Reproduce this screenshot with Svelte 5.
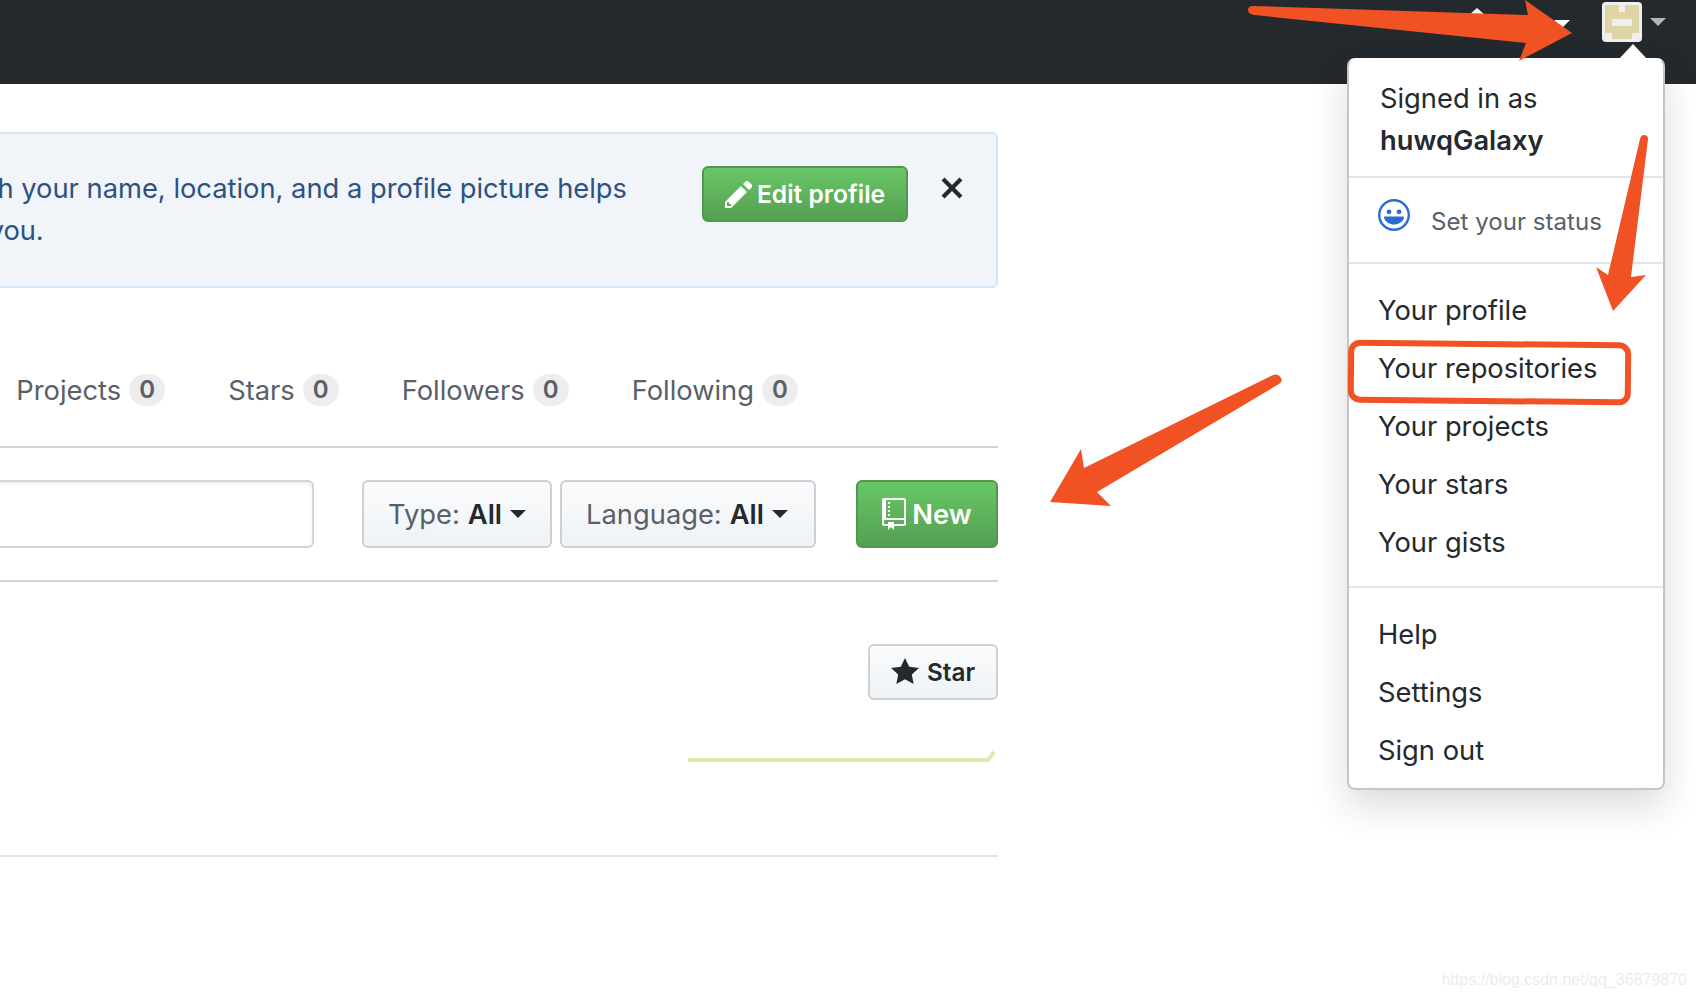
<script>
	const tabs = ['Projects', 'Stars', 'Followers', 'Following'];
	const menuMain = ['Your profile', 'Your repositories', 'Your projects', 'Your stars', 'Your gists'];
	const menuExtra = ['Help', 'Settings', 'Sign out'];
</script>

<div class="page">
	<header class="topbar">
		<span class="tri up"></span>
		<span class="tri down"></span>
		<svg class="avatar" viewBox="0 0 40 40" aria-hidden="true">
			<rect width="40" height="40" rx="4" fill="#efefef" />
			<path d="M3 3h14v7h6V3h14v28h-7v6H10v-6H3z" fill="#dfd4a3" />
			<rect x="10" y="17" width="20" height="7" fill="#efefef" />
		</svg>
		<span class="tri gray"></span>
	</header>

	<main class="content">
		<section class="banner">
			<p class="message">
				Updating your profile with your name, location, and a profile picture helps<br />
				<span class="second">other users get to know you.</span>
			</p>
			<button class="btn green edit">
				<svg viewBox="0 0 14 16" width="28" height="32" fill="#fff" aria-hidden="true">
					<path d="M0 12v3h3l8-8-3-3-8 8zm3 2H1v-2h1v1h1v1zm10.3-9.3L12 6 9 3l1.3-1.3a.996.996 0 011.41 0l1.59 1.59c.39.39.39 1.02 0 1.41z" />
				</svg>
				Edit profile
			</button>
			<svg class="close" viewBox="0 0 12 16" width="24" height="32" fill="#24292e" aria-hidden="true">
				<path d="M7.48 8l3.75 3.75-1.48 1.48L6 9.48l-3.75 3.75-1.48-1.48L4.52 8 .77 4.25l1.48-1.48L6 6.52l3.75-3.75 1.48 1.48L7.48 8z" />
			</svg>
		</section>

		<nav class="tabs">
			{#each tabs as tab}
				<span class="tab">{tab}<span class="count">0</span></span>
			{/each}
		</nav>

		<div class="filters">
			<div class="search"></div>
			<button class="btn gray type">Type: <b>All</b><i class="caret"></i></button>
			<button class="btn gray lang">Language: <b>All</b><i class="caret"></i></button>
			<button class="btn green new">
				<svg viewBox="0 0 12 16" width="24" height="32" fill="#fff" aria-hidden="true">
					<path d="M4 9H3V8h1v1zm0-3H3v1h1V6zm0-2H3v1h1V4zm0-2H3v1h1V2zm8-1v12c0 .55-.45 1-1 1H6v2l-1.5-1.5L3 16v-2H1c-.55 0-1-.45-1-1V1c0-.55.45-1 1-1h10c.55 0 1 .45 1 1zm-1 10H1v2h2v-1h3v1h5v-2zm0-10H2v9h9V1z" />
				</svg>
				New
			</button>
		</div>

		<div class="repo">
			<button class="btn gray star">
				<svg viewBox="0 0 14 16" width="28" height="32" fill="#24292e" aria-hidden="true">
					<path d="M14 6l-4.9-.64L7 1 4.9 5.36 0 6l3.6 3.26L2.67 14 7 11.67 11.33 14l-.93-4.74L14 6z" />
				</svg>
				Star
			</button>
			<svg class="spark" width="310" height="14" viewBox="0 0 310 14" aria-hidden="true">
				<path d="M0 11h300l6-8" fill="none" stroke="#dbeab0" stroke-width="4" />
			</svg>
		</div>
	</main>

	<div class="menu">
		<span class="menu-caret"></span>
		<div class="signed">Signed in as<br /><strong>huwqGalaxy</strong></div>
		<div class="status">
			<svg viewBox="0 0 16 16" width="32" height="32" fill="#2a6dd2" aria-hidden="true">
				<path fill-rule="evenodd" d="M8 0C3.58 0 0 3.58 0 8s3.58 8 8 8 8-3.58 8-8-3.58-8-8-8zm4.81 12.81a6.72 6.72 0 01-2.17 1.45c-.83.36-1.72.53-2.64.53-.92 0-1.81-.17-2.64-.53-.81-.34-1.55-.83-2.17-1.45a6.773 6.773 0 01-1.45-2.17A6.59 6.59 0 011.21 8c0-.92.17-1.81.53-2.64.34-.81.83-1.55 1.45-2.17.62-.62 1.36-1.11 2.17-1.45A6.59 6.59 0 018 1.21c.92 0 1.81.17 2.64.53.81.34 1.55.83 2.17 1.45.62.62 1.11 1.36 1.45 2.17.36.83.53 1.72.53 2.64 0 .92-.17 1.81-.53 2.64-.34.81-.83 1.55-1.45 2.17z" />
				<circle cx="5.5" cy="6.4" r="1.2" />
				<circle cx="10.5" cy="6.4" r="1.2" />
				<path d="M13 9.4c-.6 2.2-2.9 3.4-5 3.4s-4.400-1.200-5-3.400c-.1-.3.2-.6.5-.6h9c.3 0 .6.3.5.6z" />
			</svg>
			<span>Set your status</span>
		</div>
		<ul class="group">
			{#each menuMain as item}
				<li>{item}</li>
			{/each}
		</ul>
		<ul class="group extra">
			{#each menuExtra as item}
				<li>{item}</li>
			{/each}
		</ul>
	</div>

	<!-- annotations drawn on top of the screenshot -->
	<svg class="marks" width="1696" height="996" viewBox="0 0 1696 996" aria-hidden="true">
		<g fill="#f05223">
			<path d="M1254 6L1528 15L1525 0L1572 33L1519 61L1526 43L1254 15Q1248 14 1248 10Q1248 6 1254 6Z" />
			<path d="M1640 139Q1641 135 1644 135Q1648 135 1648 139L1631 277L1646 275L1613 311L1596 267L1608 275Z" />
			<path d="M1272 375.500Q1277 373 1280 376.500Q1284 381 1279 384L1097 492L1111 506L1050 502L1081 449L1084 468Z" />
		</g>
		<rect x="1351" y="344" width="277" height="57" rx="9" fill="none" stroke="#f05223" stroke-width="6" transform="rotate(0.6 1490 372)" />
	</svg>

	<span class="watermark">https://blog.csdn.net/qq_36879870</span>
</div>

<style>
	:global(body) {
		background: #fff;
	}
	.page {
		position: relative;
		width: 1696px;
		height: 996px;
		overflow: hidden;
		font-family: Inter, 'Liberation Sans', sans-serif;
		font-size: 27.3px;
		color: #24292e;
	}
	.topbar {
		display: flex;
		justify-content: flex-end;
		height: 84px;
		padding-right: 30px;
		box-sizing: border-box;
		background: #24292e;
	}
	.tri {
		width: 0;
		height: 0;
		border-left: 8px solid transparent;
		border-right: 8px solid transparent;
	}
	.tri.up {
		margin: 8px 69px 0 0;
		border-bottom: 7px solid #fff;
	}
	.tri.down {
		margin: 20px 32px 0 0;
		border-top: 8px solid #fff;
	}
	.tri.gray {
		margin: 18px 0 0 8px;
		border-top: 8px solid #b4b5b6;
	}
	.avatar {
		width: 40px;
		height: 40px;
		margin-top: 2px;
	}
	.content {
		width: 998px;
		padding-top: 48px;
	}
	.banner {
		display: flex;
		justify-content: flex-end;
		align-items: flex-start;
		height: 156px;
		box-sizing: border-box;
		margin-left: -40px;
		padding: 32px 32px 0 0;
		background: #f1f4f9;
		border: 2px solid #d3e5f6;
		border-radius: 6px;
	}
	.message {
		flex-shrink: 0;
		margin: 2px 75px 0 0;
		white-space: nowrap;
		line-height: 42px;
		color: #2c5282;
	}
	.second {
		letter-spacing: -0.15px;
	}
	.btn {
		display: inline-flex;
		align-items: center;
		justify-content: center;
		box-sizing: border-box;
		padding: 0;
		border-radius: 6px;
		font: inherit;
		font-weight: 600;
		white-space: nowrap;
	}
	.btn.green {
		color: #fff;
		background: linear-gradient(#69c767, #559f52);
		border: 2px solid #529650;
	}
	.btn.gray {
		color: #586069;
		font-weight: 400;
		background: linear-gradient(#fafbfc, #eff3f6);
		border: 2px solid #cdd0d3;
	}
	.btn.gray b {
		margin-left: 8px;
		font-weight: 600;
		color: #24292e;
	}
	.edit {
		width: 206px;
		height: 56px;
		font-size: 24.6px;
		gap: 4px;
		flex-shrink: 0;
	}
	.close {
		margin: 6px 0 0 32px;
		flex-shrink: 0;
	}
	.tabs {
		display: flex;
		justify-content: flex-end;
		gap: 63px;
		height: 160px;
		box-sizing: border-box;
		padding: 84px 200px 0 0;
		border-bottom: 2px solid #d1d5da;
		color: #586069;
	}
	.tab {
		display: flex;
		align-items: center;
		gap: 8px;
		height: 36px;
		flex-shrink: 0;
	}
	.count {
		width: 36px;
		height: 32px;
		border-radius: 16px;
		background: #ededed;
		font-size: 24px;
		font-weight: 600;
		line-height: 32px;
		text-align: center;
	}
	.filters {
		display: flex;
		align-items: center;
		height: 134px;
		box-sizing: border-box;
		border-bottom: 2px solid #d1d5da;
	}
	.search {
		flex: 1;
		height: 68px;
		margin: 0 48px 0 -40px;
		box-sizing: border-box;
		border: 2px solid #d1d5da;
		border-radius: 6px;
		box-shadow: inset 0 2px 4px rgba(27, 31, 35, 0.075);
	}
	.filters .btn {
		height: 68px;
		flex-shrink: 0;
	}
	.type {
		width: 190px;
		margin-right: 8px;
	}
	.lang {
		width: 256px;
		margin-right: 40px;
		padding-right: 2px;
	}
	.caret {
		margin-left: 8px;
		border-top: 8px solid #24292e;
		border-left: 8px solid transparent;
		border-right: 8px solid transparent;
	}
	.new {
		width: 142px;
		gap: 6px;
	}
	.repo {
		display: flex;
		flex-direction: column;
		align-items: flex-end;
		height: 275px;
		box-sizing: border-box;
		padding-top: 62px;
		border-bottom: 2px solid #e1e4e8;
	}
	.star {
		width: 130px;
		height: 56px;
		gap: 8px;
		font-size: 24.3px;
		font-weight: 600 !important;
		color: #24292e !important;
	}
	.spark {
		margin: 49px 0 0;
	}
	.menu {
		position: absolute;
		top: 58px;
		left: 1347px;
		width: 318px;
		height: 732px;
		box-sizing: border-box;
		background: #fff;
		border: 2px solid #c4c6c8;
		border-top-color: #fff;
		border-radius: 8px;
		box-shadow: 0 16px 36px rgba(27, 31, 35, 0.16);
	}
	.menu-caret {
		position: absolute;
		top: -16px;
		left: 269px;
		border-bottom: 16px solid #fff;
		border-left: 15px solid transparent;
		border-right: 15px solid transparent;
	}
	.signed {
		height: 116px;
		box-sizing: border-box;
		padding: 18px 31px 0;
		line-height: 42px;
	}
	.signed strong {
		font-weight: 600;
	}
	.status {
		display: flex;
		align-items: flex-start;
		gap: 21px;
		height: 88px;
		box-sizing: border-box;
		padding: 21px 29px 0;
		border-top: 2px solid #e1e4e8;
		border-bottom: 2px solid #e1e4e8;
		font-size: 24px;
		letter-spacing: 0.05px;
		color: #586069;
	}
	.status svg {
		flex-shrink: 0;
	}
	.status span {
		margin-top: 7px;
		line-height: 32px;
	}
	.group {
		margin: 0;
		padding: 17px 0 15px;
		list-style: none;
	}
	.group li {
		height: 58px;
		padding-left: 29px;
		line-height: 60px;
	}
	.extra {
		padding: 17px 0 0;
		border-top: 2px solid #e1e4e8;
	}
	.marks {
		position: absolute;
		top: 0;
		left: 0;
		pointer-events: none;
	}
	.watermark {
		position: absolute;
		right: 9px;
		bottom: 7px;
		font-family: 'Liberation Sans', sans-serif;
		font-size: 16px;
		color: #ececec;
	}
</style>
